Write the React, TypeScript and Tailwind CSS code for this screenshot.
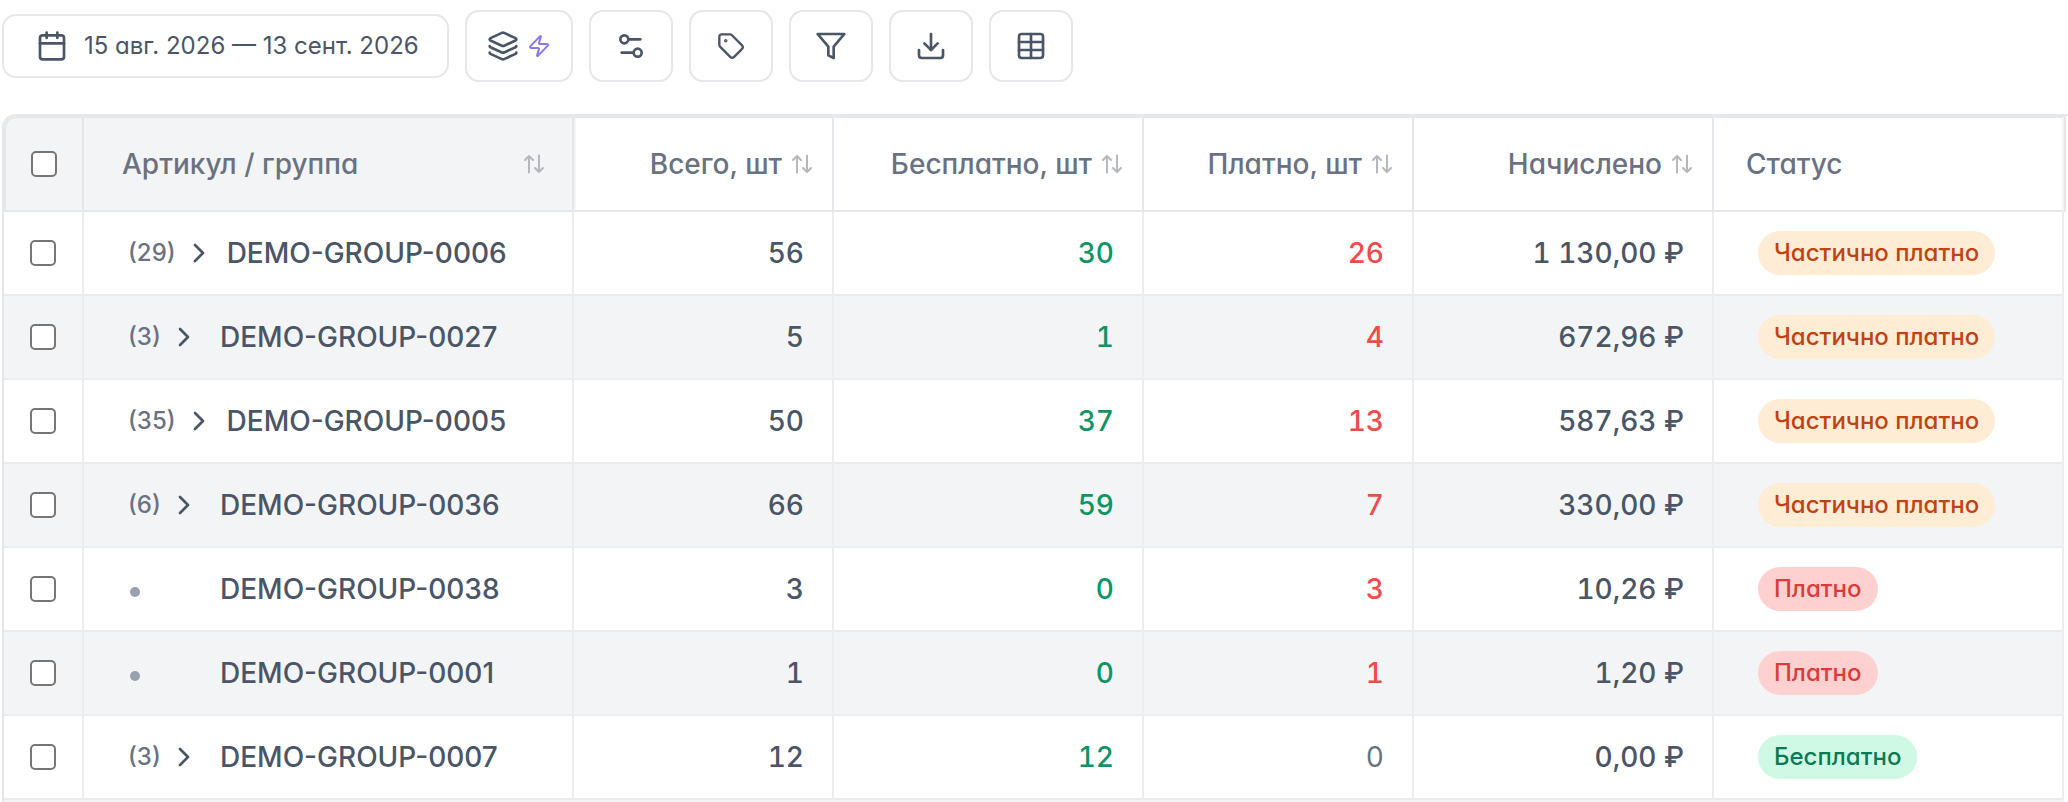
import type { ReactNode } from "react";
import { Calendar, ChevronRight, Download, Layers, Settings2, Table, Tag, Zap } from "lucide-react";

type Status = "partial" | "paid" | "free";

interface Row {
  name: string;
  children?: number;
  total: number;
  free: number;
  paid: number;
  charged: string;
  status: Status;
}

const ROWS: Row[] = [
  { name: "DEMO-GROUP-0006", children: 29, total: 56, free: 30, paid: 26, charged: "1 130,00 ₽", status: "partial" },
  { name: "DEMO-GROUP-0027", children: 3,  total: 5,  free: 1,  paid: 4,  charged: "672,96 ₽",   status: "partial" },
  { name: "DEMO-GROUP-0005", children: 35, total: 50, free: 37, paid: 13, charged: "587,63 ₽",   status: "partial" },
  { name: "DEMO-GROUP-0036", children: 6,  total: 66, free: 59, paid: 7,  charged: "330,00 ₽",   status: "partial" },
  { name: "DEMO-GROUP-0038",               total: 3,  free: 0,  paid: 3,  charged: "10,26 ₽",    status: "paid" },
  { name: "DEMO-GROUP-0001",               total: 1,  free: 0,  paid: 1,  charged: "1,20 ₽",     status: "paid" },
  { name: "DEMO-GROUP-0007", children: 3,  total: 12, free: 12, paid: 0,  charged: "0,00 ₽",     status: "free" },
];

const STATUS_LABELS: Record<Status, string> = {
  partial: "Частично платно",
  paid: "Платно",
  free: "Бесплатно",
};
const STATUS_STYLES: Record<Status, string> = {
  partial: "bg-[#ffecd5] text-[#bf4413]",
  paid:    "bg-[#ffd0d0] text-[#d93c3c]",
  free:    "bg-[#cff9e4] text-[#0a7a55]",
};

const NUMERIC_COLUMNS = ["Всего, шт", "Бесплатно, шт", "Платно, шт", "Начислено"];

function ToolButton({ label, children }: { label: string; children: ReactNode }) {
  return (
    <button
      type="button"
      aria-label={label}
      className="flex h-18 min-w-[84px] items-center justify-center gap-2 rounded-[14px] border-2 border-gray-200 bg-white px-5 text-gray-600"
    >
      {children}
    </button>
  );
}

function FilterIcon() {
  return (
    <svg viewBox="0 0 24 24" className="size-8" fill="none" stroke="currentColor" strokeWidth={2} strokeLinecap="round" strokeLinejoin="round">
      <polygon points="22 3 2 3 10 12.46 10 19 14 21 14 12.46 22 3" />
    </svg>
  );
}

function SortIcon() {
  return (
    <svg viewBox="0 0 24 24" className="size-6 shrink-0 text-[#b4b7bd]" fill="none" stroke="currentColor" strokeWidth={2} strokeLinecap="round" strokeLinejoin="round">
      <path d="M7 20.5V4M3 8l4-4 4 4" />
      <path d="M17 3.5V20M13 16l4 4 4-4" />
    </svg>
  );
}

function Checkbox({ label }: { label: string }) {
  return (
    <input
      type="checkbox"
      aria-label={label}
      className="mx-auto block size-[26px] appearance-none rounded-[5px] border-2 border-[#767676] bg-white checked:bg-blue-600"
    />
  );
}

function GroupRow({ row }: { row: Row }) {
  const cell = "border-r-2 border-b-2 border-[#ebecee] px-7 text-right tabular-nums";
  return (
    <tr className="h-[84px] even:bg-gray-100">
      <td className="border-r-2 border-b-2 border-[#ebecee]">
        <Checkbox label={row.name} />
      </td>
      <td className="border-r-2 border-b-2 border-[#ebecee] pl-11">
        <div className="flex items-center">
          {row.children ? (
            <button type="button" className="flex min-w-[92px] items-center gap-[7px] text-gray-500">
              <span className="text-2xl">({row.children})</span>
              <ChevronRight size={32} className="mr-3 text-gray-600" />
            </button>
          ) : (
            <span className="w-[92px] pl-[2px]">
              <span className="mt-1.5 block size-[10px] rounded-full bg-gray-400" />
            </span>
          )}
          <span>{row.name}</span>
        </div>
      </td>
      <td className={cell}>{row.total}</td>
      <td className={`${cell} text-[#0e9466]`}>{row.free}</td>
      <td className={`${cell} ${row.paid > 0 ? "text-[#ef4b4b]" : "font-normal text-gray-500"}`}>{row.paid}</td>
      <td className={cell}>{row.charged}</td>
      <td className="border-r-2 border-b-2 border-[#ebecee] pl-11">
        <span className={`inline-flex h-11 items-center rounded-full px-4 text-2xl ${STATUS_STYLES[row.status]}`}>
          {STATUS_LABELS[row.status]}
        </span>
      </td>
    </tr>
  );
}

export default function App() {
  return (
    <div className="flex h-screen flex-col overflow-hidden bg-white pl-[2px] font-['Inter',sans-serif] text-gray-600 [font-feature-settings:'cv11']">
      {/* Toolbar */}
      <div className="flex shrink-0 items-center gap-4 pt-[10px] pb-8">
        <button
          type="button"
          className="flex h-16 items-center gap-4 rounded-[14px] border-2 border-gray-200 bg-white pr-7 pl-8 text-2xl text-gray-600"
        >
          <Calendar size={32} />
          15 авг. 2026 — 13 сент. 2026
        </button>
        <ToolButton label="Группировка">
          <Layers size={32} />
          <Zap size={24} className="text-[#8b78ee]" />
        </ToolButton>
        <ToolButton label="Настройки"><Settings2 size={32} /></ToolButton>
        <ToolButton label="Метки"><Tag size={28} /></ToolButton>
        <ToolButton label="Фильтр"><FilterIcon /></ToolButton>
        <ToolButton label="Скачать"><Download size={32} /></ToolButton>
        <ToolButton label="Таблица"><Table size={32} /></ToolButton>
      </div>

      {/* Table */}
      <div className="min-h-0 flex-1 overflow-hidden rounded-tl-[14px] border-t-2 border-l-2 border-gray-200 pr-1">
        <table className="w-full table-fixed border-separate border-spacing-0 text-[28px] leading-10 font-medium">
          <colgroup>
            <col className="w-[80px]" />
            <col className="w-[490px]" />
            <col className="w-[260px]" />
            <col className="w-[310px]" />
            <col className="w-[270px]" />
            <col className="w-[300px]" />
            <col />
          </colgroup>
          <thead>
            <tr className="h-24 text-gray-500">
              <th className="rounded-tl-xl border-2 border-gray-200 bg-gray-100">
                <Checkbox label="Выбрать все" />
              </th>
              <th className="border-y-2 border-r-2 border-gray-200 bg-gray-100 pr-[26px] pl-[38px] font-medium shadow-[2px_0_0_#f3f4f6]">
                <button type="button" className="flex w-full items-center justify-between">
                  Артикул / группа
                  <SortIcon />
                </button>
              </th>
              {NUMERIC_COLUMNS.map((title) => (
                <th key={title} className="border-y-2 border-r-2 border-gray-200 pr-[18px] font-medium">
                  <button type="button" className="ml-auto flex items-center gap-2">
                    {title}
                    <SortIcon />
                  </button>
                </th>
              ))}
              <th className="border-y-2 border-r-2 border-gray-200 border-r-gray-100 pl-8 text-left font-medium shadow-[2px_0_0_#e5e7eb]">
                Статус
              </th>
            </tr>
          </thead>
          <tbody>
            {ROWS.map((row) => (
              <GroupRow key={row.name} row={row} />
            ))}
          </tbody>
        </table>
        <div className="h-full bg-gray-100" />
      </div>
    </div>
  );
}
